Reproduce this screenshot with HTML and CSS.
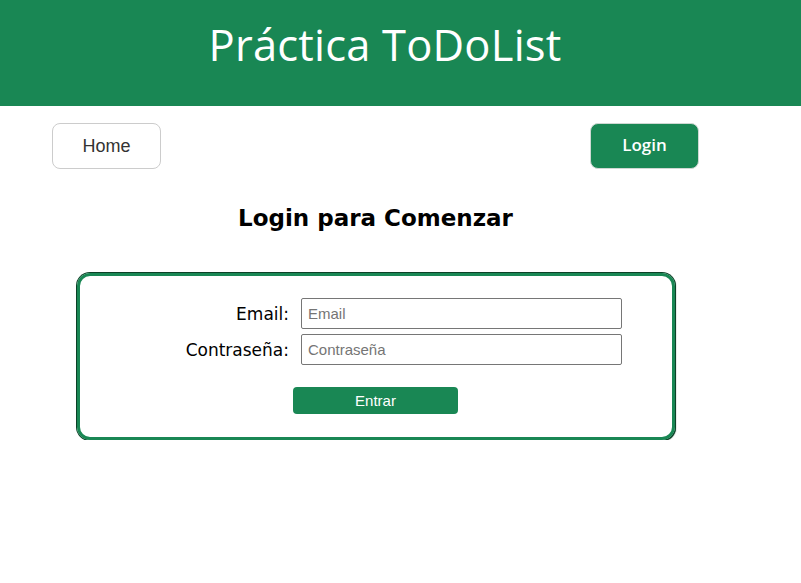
FILE: index.html
```html
<!DOCTYPE html>
<html lang="es">
<head>
<meta charset="utf-8">
<title>Práctica ToDoList</title>
<link rel="stylesheet" href="styles.css">
</head>
<body>
<header class="top">
  <h1 class="title">Práctica ToDoList</h1>
</header>
<nav class="nav">
  <a class="btn btn-home" href="#">Home</a>
  <a class="btn btn-login" href="#">Login</a>
</nav>
<main class="main">
  <h2 class="heading">Login para Comenzar</h2>
  <form class="card">
    <div class="row">
      <label class="lbl" for="email">Email:</label>
      <input class="inp" id="email" type="text" placeholder="Email">
    </div>
    <div class="row">
      <label class="lbl" for="pass">Contraseña:</label>
      <input class="inp" id="pass" type="password" placeholder="Contraseña">
    </div>
    <div class="actions">
      <button class="submit" type="button">Entrar</button>
    </div>
  </form>
</main>
</body>
</html>
```
FILE: styles.css
```css
* { box-sizing: border-box; }
html, body { margin: 0; padding: 0; background: #fff; }
body { font-family: "DejaVu Sans", sans-serif; }

.top {
  background: #198754;
  height: 106px;
  display: flex;
  justify-content: center;
}
.title {
  margin: 16px 0 0 -31px;
  font-family: "Open Sans", sans-serif;
  font-weight: 400;
  font-size: 43.5px;
  line-height: 58px;
  color: #fff;
  letter-spacing: 0.2px;
}

.nav {
  display: flex;
  justify-content: space-between;
  padding: 17px 102px 0 52px;
}
.btn {
  width: 109px;
  height: 46px;
  border-radius: 8px;
  display: flex;
  align-items: center;
  justify-content: center;
  text-decoration: none;
  font-family: "Liberation Sans", Arial, sans-serif;
  font-size: 18px;
}
.btn-home {
  border: 1px solid #ccc;
  color: #333;
}
.btn-login {
  background: #198754;
  border: 1px solid #cfd8d3;
  color: #fff;
  font-family: "Open Sans", sans-serif;
  font-weight: 600;
  font-size: 17px;
  padding-bottom: 3px;
}

.main {
  display: flex;
  flex-direction: column;
  align-items: flex-start;
}
.heading {
  margin: 34px 0 0 238px;
  font-size: 23px;
  line-height: 31px;
  font-weight: bold;
  color: #000;
}
.card {
  margin: 39px 0 0 77px;
  width: 598px;
  height: 167px;
  border: 3px solid #198754;
  border-radius: 13px;
  box-shadow: 0 0 0 1px #0c4027, 1px 1px 1px #0c4027;
  padding: 22px 0 0 0;
  display: flex;
  flex-direction: column;
  gap: 5px;
}
.row {
  display: flex;
  align-items: center;
  height: 31px;
}
.lbl {
  width: 221px;
  text-align: right;
  padding-right: 12px;
  font-size: 17px;
  color: #000;
}
.inp {
  width: 321px;
  height: 31px;
  border: 1px solid #767676;
  border-radius: 2px;
  padding: 0 6px;
  font-family: "Liberation Sans", Arial, sans-serif;
  font-size: 15px;
  color: #333;
}
.inp::placeholder { color: #757575; }
.actions {
  margin-top: 17px;
  padding-left: 213px;
}
.submit {
  width: 165px;
  height: 27px;
  background: #198754;
  color: #fff;
  border: none;
  border-radius: 4px;
  font-family: "Liberation Sans", Arial, sans-serif;
  font-size: 15px;
}
```
